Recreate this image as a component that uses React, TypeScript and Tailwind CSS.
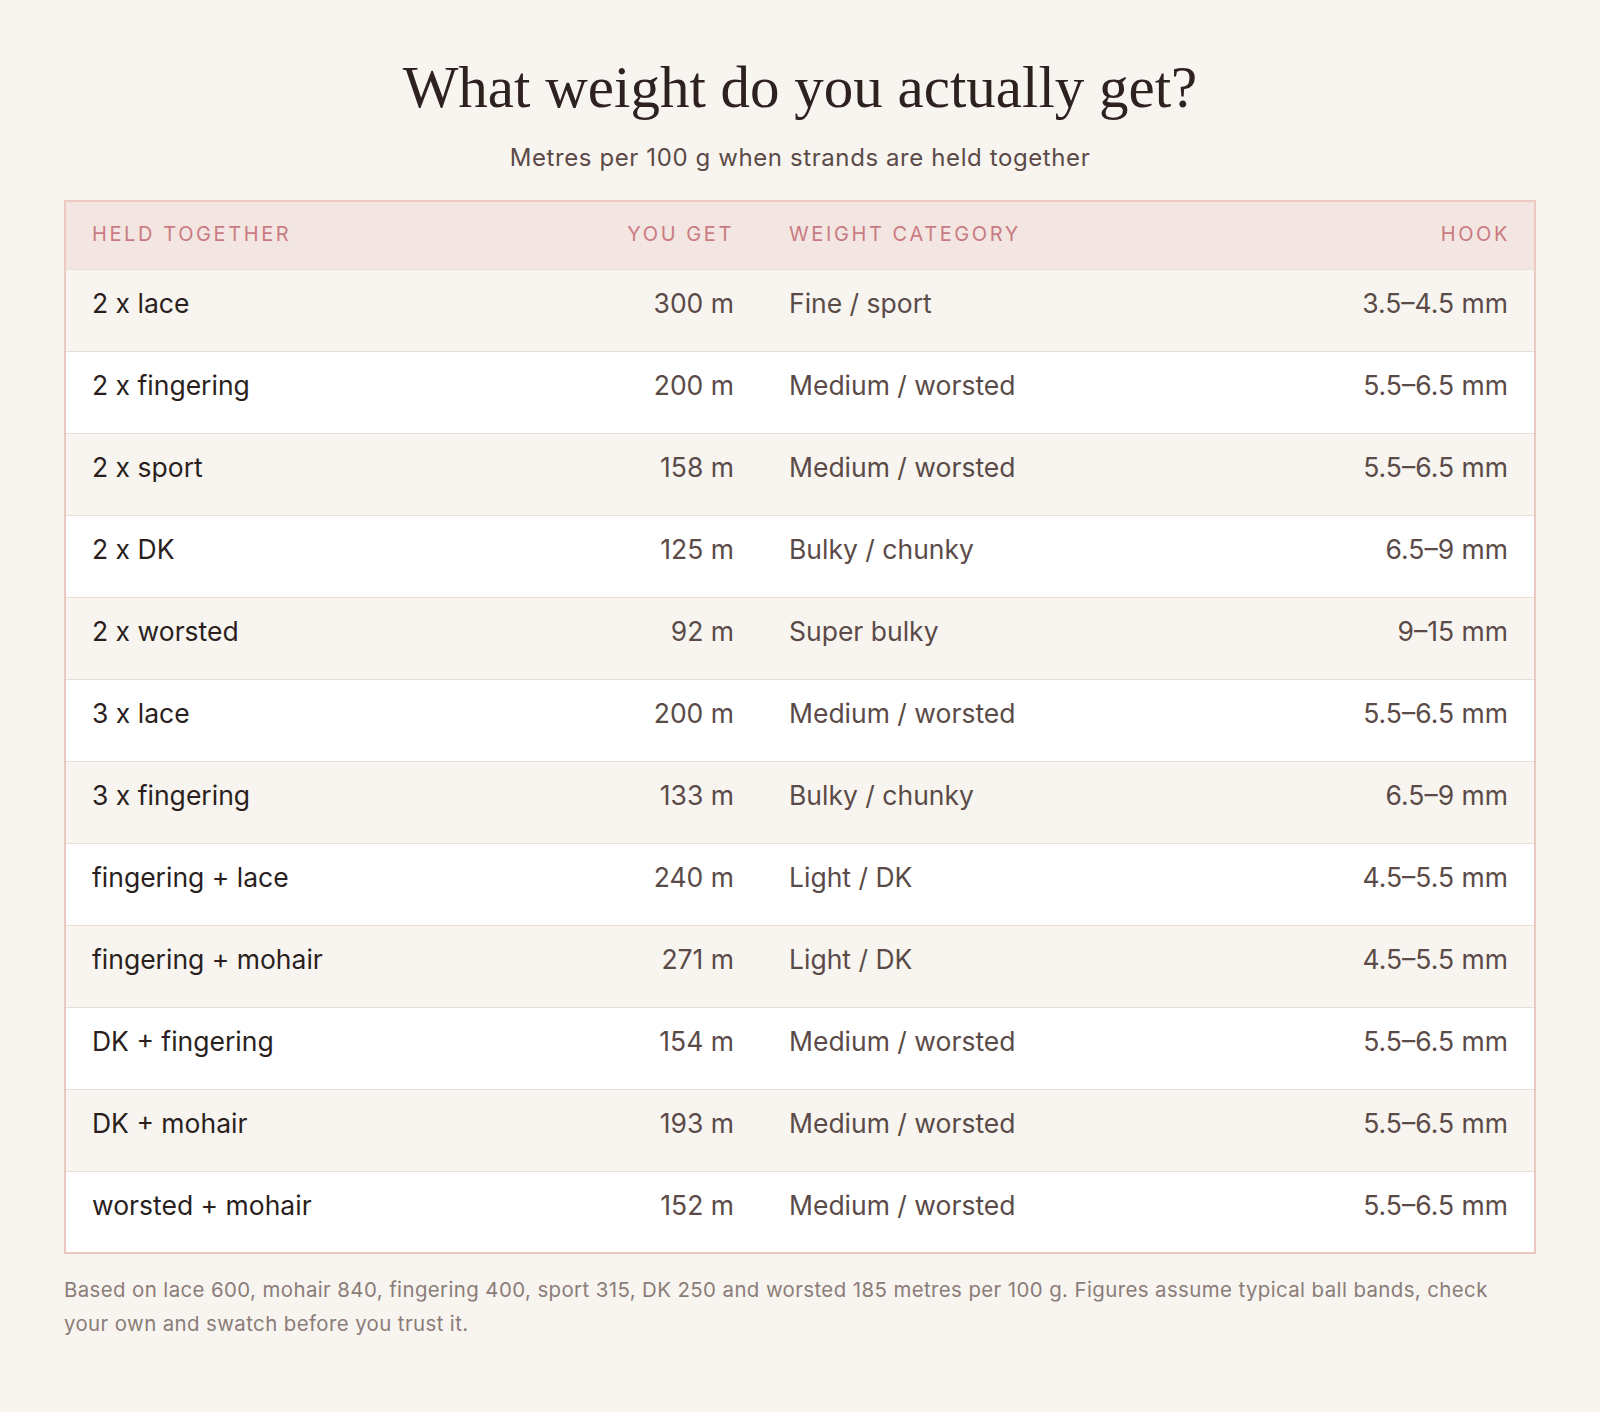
import React from "react";

const rows: [string, string, string, string][] = [
  ["2 x lace", "300 m", "Fine / sport", "3.5–4.5 mm"],
  ["2 x fingering", "200 m", "Medium / worsted", "5.5–6.5 mm"],
  ["2 x sport", "158 m", "Medium / worsted", "5.5–6.5 mm"],
  ["2 x DK", "125 m", "Bulky / chunky", "6.5–9 mm"],
  ["2 x worsted", "92 m", "Super bulky", "9–15 mm"],
  ["3 x lace", "200 m", "Medium / worsted", "5.5–6.5 mm"],
  ["3 x fingering", "133 m", "Bulky / chunky", "6.5–9 mm"],
  ["fingering + lace", "240 m", "Light / DK", "4.5–5.5 mm"],
  ["fingering + mohair", "271 m", "Light / DK", "4.5–5.5 mm"],
  ["DK + fingering", "154 m", "Medium / worsted", "5.5–6.5 mm"],
  ["DK + mohair", "193 m", "Medium / worsted", "5.5–6.5 mm"],
  ["worsted + mohair", "152 m", "Medium / worsted", "5.5–6.5 mm"],
];

export default function App() {
  return (
    <div
      className="min-h-[1412px] w-full bg-[#f8f5f1] px-16 pt-[55px] pb-16"
      style={{ fontFamily: "Inter, 'Noto Sans', sans-serif" }}
    >
      <h1
        className="text-center text-[59px] leading-[64px] text-[#2d2220]"
        style={{ fontFamily: "'Liberation Serif', 'DejaVu Serif', serif" }}
      >
        What weight do you actually get?
      </h1>
      <p className="mt-[23px] text-center text-[24px] leading-[32px] tracking-[0.025em] text-[#5b4a47]">
        Metres per 100 g when strands are held together
      </p>

      <div className="mt-[26px] border-2 border-[#ebc8c2]">
        <div className="grid h-[68px] grid-cols-[454px_240px_1fr_300px] items-center border-b border-[#ecdcd6] bg-[#f3e5e1] pb-[4px] text-[20px] uppercase tracking-[0.13em] text-[#c97b81]">
          <div className="px-[26px]">Held together</div>
          <div className="px-[26px] text-right">You get</div>
          <div className="pl-[29px] pr-[26px]">Weight category</div>
          <div className="pl-[26px] pr-[24px] text-right">Hook</div>
        </div>
        {rows.map((r, i) => {
          const last = i === rows.length - 1;
          return (
            <div
              key={r[0]}
              className={
                "grid grid-cols-[454px_240px_1fr_300px] items-start pt-[17px] text-[26.5px] leading-[32px] " +
                (last ? "h-[80px] " : "h-[82px] border-b border-[#e9dfd8] ") +
                (i % 2 === 0 ? "bg-[#f8f5f1]" : "bg-white")
              }
            >
              <div className="px-[26px] text-[#2a1f1d]">{r[0]}</div>
              <div className="px-[26px] text-right text-[#5b4b48]">{r[1]}</div>
              <div className="pl-[29px] pr-[26px] text-[#5b4b48]">{r[2]}</div>
              <div className="px-[26px] text-right text-[#5b4b48]">{r[3]}</div>
            </div>
          );
        })}
      </div>

      <p className="mt-[19px] max-w-[1450px] text-[20.4px] leading-[34px] tracking-[0.02em] text-[#8b7c78]">
        Based on lace 600, mohair 840, fingering 400, sport 315, DK 250 and worsted 185 metres per 100 g. Figures assume typical ball bands, check your own and swatch before you trust it.
      </p>
    </div>
  );
}
